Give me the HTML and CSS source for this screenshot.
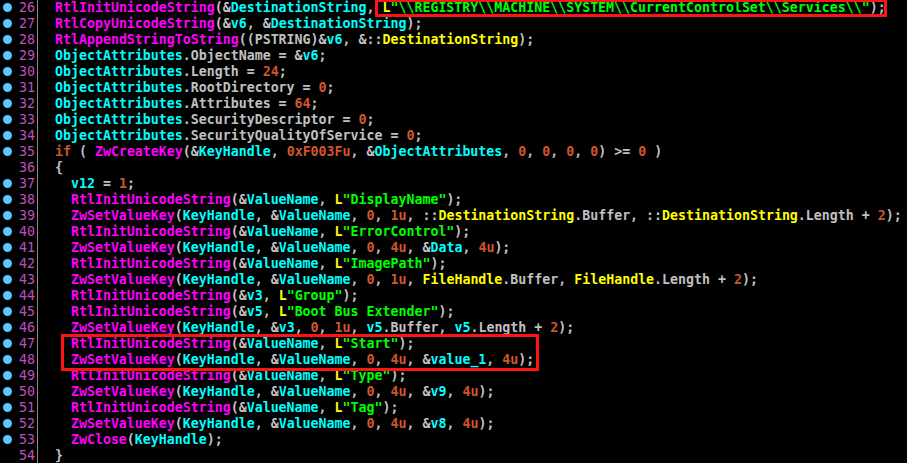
FILE: index.html
```html
<!DOCTYPE html>
<html lang="en">
<head>
  <meta charset="UTF-8" />
  <title>Pseudocode</title>
  <link rel="stylesheet" href="styles.css">
</head>
<body>
  <div class="view">
    <div class="line"><span class="gutter"><i class="dot"></i><span class="num">26</span></span><span class="code">  <span class="f">RtlInitUnicodeString</span>(&amp;<span class="v">DestinationString</span>, <span class="g">L</span><span class="s">"\\REGISTRY\\MACHINE\\SYSTEM\\CurrentControlSet\\Services\\"</span>);</span></div>
    <div class="line"><span class="gutter"><i class="dot"></i><span class="num">27</span></span><span class="code">  <span class="f">RtlCopyUnicodeString</span>(&amp;<span class="v">v6</span>, &amp;<span class="v">DestinationString</span>);</span></div>
    <div class="line"><span class="gutter"><i class="dot"></i><span class="num">28</span></span><span class="code">  <span class="f">RtlAppendStringToString</span>((PSTRING)&amp;<span class="v">v6</span>, &amp;::<span class="g">DestinationString</span>);</span></div>
    <div class="line"><span class="gutter"><i class="dot"></i><span class="num">29</span></span><span class="code">  <span class="v">ObjectAttributes</span>.ObjectName = &amp;<span class="v">v6</span>;</span></div>
    <div class="line"><span class="gutter"><i class="dot"></i><span class="num">30</span></span><span class="code">  <span class="v">ObjectAttributes</span>.Length = <span class="n">24</span>;</span></div>
    <div class="line"><span class="gutter"><i class="dot"></i><span class="num">31</span></span><span class="code">  <span class="v">ObjectAttributes</span>.RootDirectory = <span class="n">0</span>;</span></div>
    <div class="line"><span class="gutter"><i class="dot"></i><span class="num">32</span></span><span class="code">  <span class="v">ObjectAttributes</span>.Attributes = <span class="n">64</span>;</span></div>
    <div class="line"><span class="gutter"><i class="dot"></i><span class="num">33</span></span><span class="code">  <span class="v">ObjectAttributes</span>.SecurityDescriptor = <span class="n">0</span>;</span></div>
    <div class="line"><span class="gutter"><i class="dot"></i><span class="num">34</span></span><span class="code">  <span class="v">ObjectAttributes</span>.SecurityQualityOfService = <span class="n">0</span>;</span></div>
    <div class="line"><span class="gutter"><i class="dot"></i><span class="num">35</span></span><span class="code">  <span class="n">if</span> ( <span class="f">ZwCreateKey</span>(&amp;<span class="v">KeyHandle</span>, <span class="n">0xF003Fu</span>, &amp;<span class="v">ObjectAttributes</span>, <span class="n">0</span>, <span class="n">0</span>, <span class="n">0</span>, <span class="n">0</span>) &gt;= <span class="n">0</span> )</span></div>
    <div class="line"><span class="gutter"><span class="num">36</span></span><span class="code">  {</span></div>
    <div class="line"><span class="gutter"><i class="dot"></i><span class="num">37</span></span><span class="code">    <span class="v">v12</span> = <span class="n">1</span>;</span></div>
    <div class="line"><span class="gutter"><i class="dot"></i><span class="num">38</span></span><span class="code">    <span class="f">RtlInitUnicodeString</span>(&amp;<span class="v">ValueName</span>, <span class="g">L</span><span class="s">"DisplayName"</span>);</span></div>
    <div class="line"><span class="gutter"><i class="dot"></i><span class="num">39</span></span><span class="code">    <span class="f">ZwSetValueKey</span>(<span class="v">KeyHandle</span>, &amp;<span class="v">ValueName</span>, <span class="n">0</span>, <span class="n">1u</span>, ::<span class="g">DestinationString</span>.Buffer, ::<span class="g">DestinationString</span>.Length + <span class="n">2</span>);</span></div>
    <div class="line"><span class="gutter"><i class="dot"></i><span class="num">40</span></span><span class="code">    <span class="f">RtlInitUnicodeString</span>(&amp;<span class="v">ValueName</span>, <span class="g">L</span><span class="s">"ErrorControl"</span>);</span></div>
    <div class="line"><span class="gutter"><i class="dot"></i><span class="num">41</span></span><span class="code">    <span class="f">ZwSetValueKey</span>(<span class="v">KeyHandle</span>, &amp;<span class="v">ValueName</span>, <span class="n">0</span>, <span class="n">4u</span>, &amp;<span class="v">Data</span>, <span class="n">4u</span>);</span></div>
    <div class="line"><span class="gutter"><i class="dot"></i><span class="num">42</span></span><span class="code">    <span class="f">RtlInitUnicodeString</span>(&amp;<span class="v">ValueName</span>, <span class="g">L</span><span class="s">"ImagePath"</span>);</span></div>
    <div class="line"><span class="gutter"><i class="dot"></i><span class="num">43</span></span><span class="code">    <span class="f">ZwSetValueKey</span>(<span class="v">KeyHandle</span>, &amp;<span class="v">ValueName</span>, <span class="n">0</span>, <span class="n">1u</span>, <span class="g">FileHandle</span>.Buffer, <span class="g">FileHandle</span>.Length + <span class="n">2</span>);</span></div>
    <div class="line"><span class="gutter"><i class="dot"></i><span class="num">44</span></span><span class="code">    <span class="f">RtlInitUnicodeString</span>(&amp;<span class="v">v3</span>, <span class="g">L</span><span class="s">"Group"</span>);</span></div>
    <div class="line"><span class="gutter"><i class="dot"></i><span class="num">45</span></span><span class="code">    <span class="f">RtlInitUnicodeString</span>(&amp;<span class="v">v5</span>, <span class="g">L</span><span class="s">"Boot Bus Extender"</span>);</span></div>
    <div class="line"><span class="gutter"><i class="dot"></i><span class="num">46</span></span><span class="code">    <span class="f">ZwSetValueKey</span>(<span class="v">KeyHandle</span>, &amp;<span class="v">v3</span>, <span class="n">0</span>, <span class="n">1u</span>, <span class="v">v5</span>.Buffer, <span class="v">v5</span>.Length + <span class="n">2</span>);</span></div>
    <div class="line"><span class="gutter"><i class="dot"></i><span class="num">47</span></span><span class="code">    <span class="f">RtlInitUnicodeString</span>(&amp;<span class="v">ValueName</span>, <span class="g">L</span><span class="s">"Start"</span>);</span></div>
    <div class="line"><span class="gutter"><i class="dot"></i><span class="num">48</span></span><span class="code">    <span class="f">ZwSetValueKey</span>(<span class="v">KeyHandle</span>, &amp;<span class="v">ValueName</span>, <span class="n">0</span>, <span class="n">4u</span>, &amp;<span class="v">value_1</span>, <span class="n">4u</span>);</span></div>
    <div class="line"><span class="gutter"><i class="dot"></i><span class="num">49</span></span><span class="code">    <span class="f">RtlInitUnicodeString</span>(&amp;<span class="v">ValueName</span>, <span class="g">L</span><span class="s">"Type"</span>);</span></div>
    <div class="line"><span class="gutter"><i class="dot"></i><span class="num">50</span></span><span class="code">    <span class="f">ZwSetValueKey</span>(<span class="v">KeyHandle</span>, &amp;<span class="v">ValueName</span>, <span class="n">0</span>, <span class="n">4u</span>, &amp;<span class="v">v9</span>, <span class="n">4u</span>);</span></div>
    <div class="line"><span class="gutter"><i class="dot"></i><span class="num">51</span></span><span class="code">    <span class="f">RtlInitUnicodeString</span>(&amp;<span class="v">ValueName</span>, <span class="g">L</span><span class="s">"Tag"</span>);</span></div>
    <div class="line"><span class="gutter"><i class="dot"></i><span class="num">52</span></span><span class="code">    <span class="f">ZwSetValueKey</span>(<span class="v">KeyHandle</span>, &amp;<span class="v">ValueName</span>, <span class="n">0</span>, <span class="n">4u</span>, &amp;<span class="v">v8</span>, <span class="n">4u</span>);</span></div>
    <div class="line"><span class="gutter"><i class="dot"></i><span class="num">53</span></span><span class="code">    <span class="f">ZwClose</span>(<span class="v">KeyHandle</span>);</span></div>
    <div class="line"><span class="gutter"><span class="num">54</span></span><span class="code">  }</span></div>

    <!-- highlight boxes drawn over the listing -->
    <div class="mark mark-path"></div>
    <div class="mark mark-start"></div>
  </div>
</body>
</html>
```

FILE: styles.css
```css
* {
  box-sizing: border-box;
  margin: 0;
  padding: 0;
}

html, body {
  height: 100%;
  background: #000;
  overflow: hidden;
}

/* pseudocode listing */
.view {
  position: relative;
  font-family: 'DejaVu Sans Mono', 'Liberation Mono', monospace;
  font-weight: bold;
  font-size: 13.28px;
  line-height: 16px;
  color: #c0c0c0;
}

.line {
  display: flex;
  height: 16px;
}

.gutter {
  position: relative;
  flex: none;
  width: 38px;
  height: 16px;
  border-right: 1px solid #8a8a8a;
}

.dot {
  position: absolute;
  left: 3px;
  top: 3px;
  width: 9px;
  height: 9px;
  border-radius: 50%;
  background: #5cc6f8;
}

.num {
  position: absolute;
  right: 2px;
  top: 0;
  color: #c04ec0;
  font-weight: normal;
}

.code {
  margin-left: 1px;
  white-space: pre;
}

/* syntax colours */
.f { color: #ff00ff; }
.v { color: #00ffff; }
.g { color: #ffff00; }
.n { color: #d0552c; }
.s { color: #00ff00; }

/* red annotation boxes */
.mark {
  position: absolute;
  border: 3px solid #ff1414;
}

.mark-path {
  left: 375px;
  top: -1px;
  width: 512px;
  height: 18px;
}

.mark-start {
  left: 61px;
  top: 334px;
  width: 478px;
  height: 37px;
}
```
